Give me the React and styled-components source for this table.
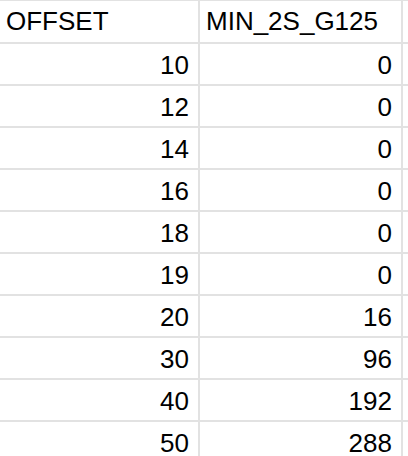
import styled, { createGlobalStyle } from 'styled-components';

const rows = [
    [10, 0],
    [12, 0],
    [14, 0],
    [16, 0],
    [18, 0],
    [19, 0],
    [20, 16],
    [30, 96],
    [40, 192],
    [50, 288],
];

function App() {
    return (
        <>
            <GlobalStyle />
            <Sheet>
                <Cell header>OFFSET</Cell>
                <Cell header>MIN_2S_G125</Cell>
                <Spare header />
                {rows.map(([offset, min]) => (
                    <Row key={offset}>
                        <Cell numeric>{offset}</Cell>
                        <Cell numeric>{min}</Cell>
                        <Spare />
                    </Row>
                ))}
            </Sheet>
        </>
    );
}

export default App;

const GlobalStyle = createGlobalStyle`
    html, body {
        margin: 0;
        padding: 0;
        background: #ffffff;
    }
    body {
        font-family: "Liberation Sans", Arial, sans-serif;
        color: #000000;
    }
`

const Sheet = styled.div`
    display: grid;
    grid-template-columns: 200px 203px 1fr;
    grid-template-rows: 43px;
    grid-auto-rows: 42px;
    width: 408px;
    height: 456px;
    overflow: hidden;
    border-top: 1px solid #e2e2e2;
    box-sizing: border-box;
`

const Row = styled.div`
    display: contents;
`

const Cell = styled.div`
    display: flex;
    align-items: flex-end;
    justify-content: ${props => props.numeric ? "flex-end" : "flex-start"};
    padding: 0 ${props => props.numeric ? "9px" : "0"} ${props => props.header ? "6px" : "4px"} ${props => props.numeric ? "0" : "6px"};
    border-right: 2px solid #e2e2e2;
    border-bottom: 2px solid #e2e2e2;
    box-sizing: border-box;
    font-size: 26px;
    line-height: 30px;
    white-space: nowrap;
`

const Spare = styled.div`
    border-bottom: 2px solid #e2e2e2;
    box-sizing: border-box;
`
